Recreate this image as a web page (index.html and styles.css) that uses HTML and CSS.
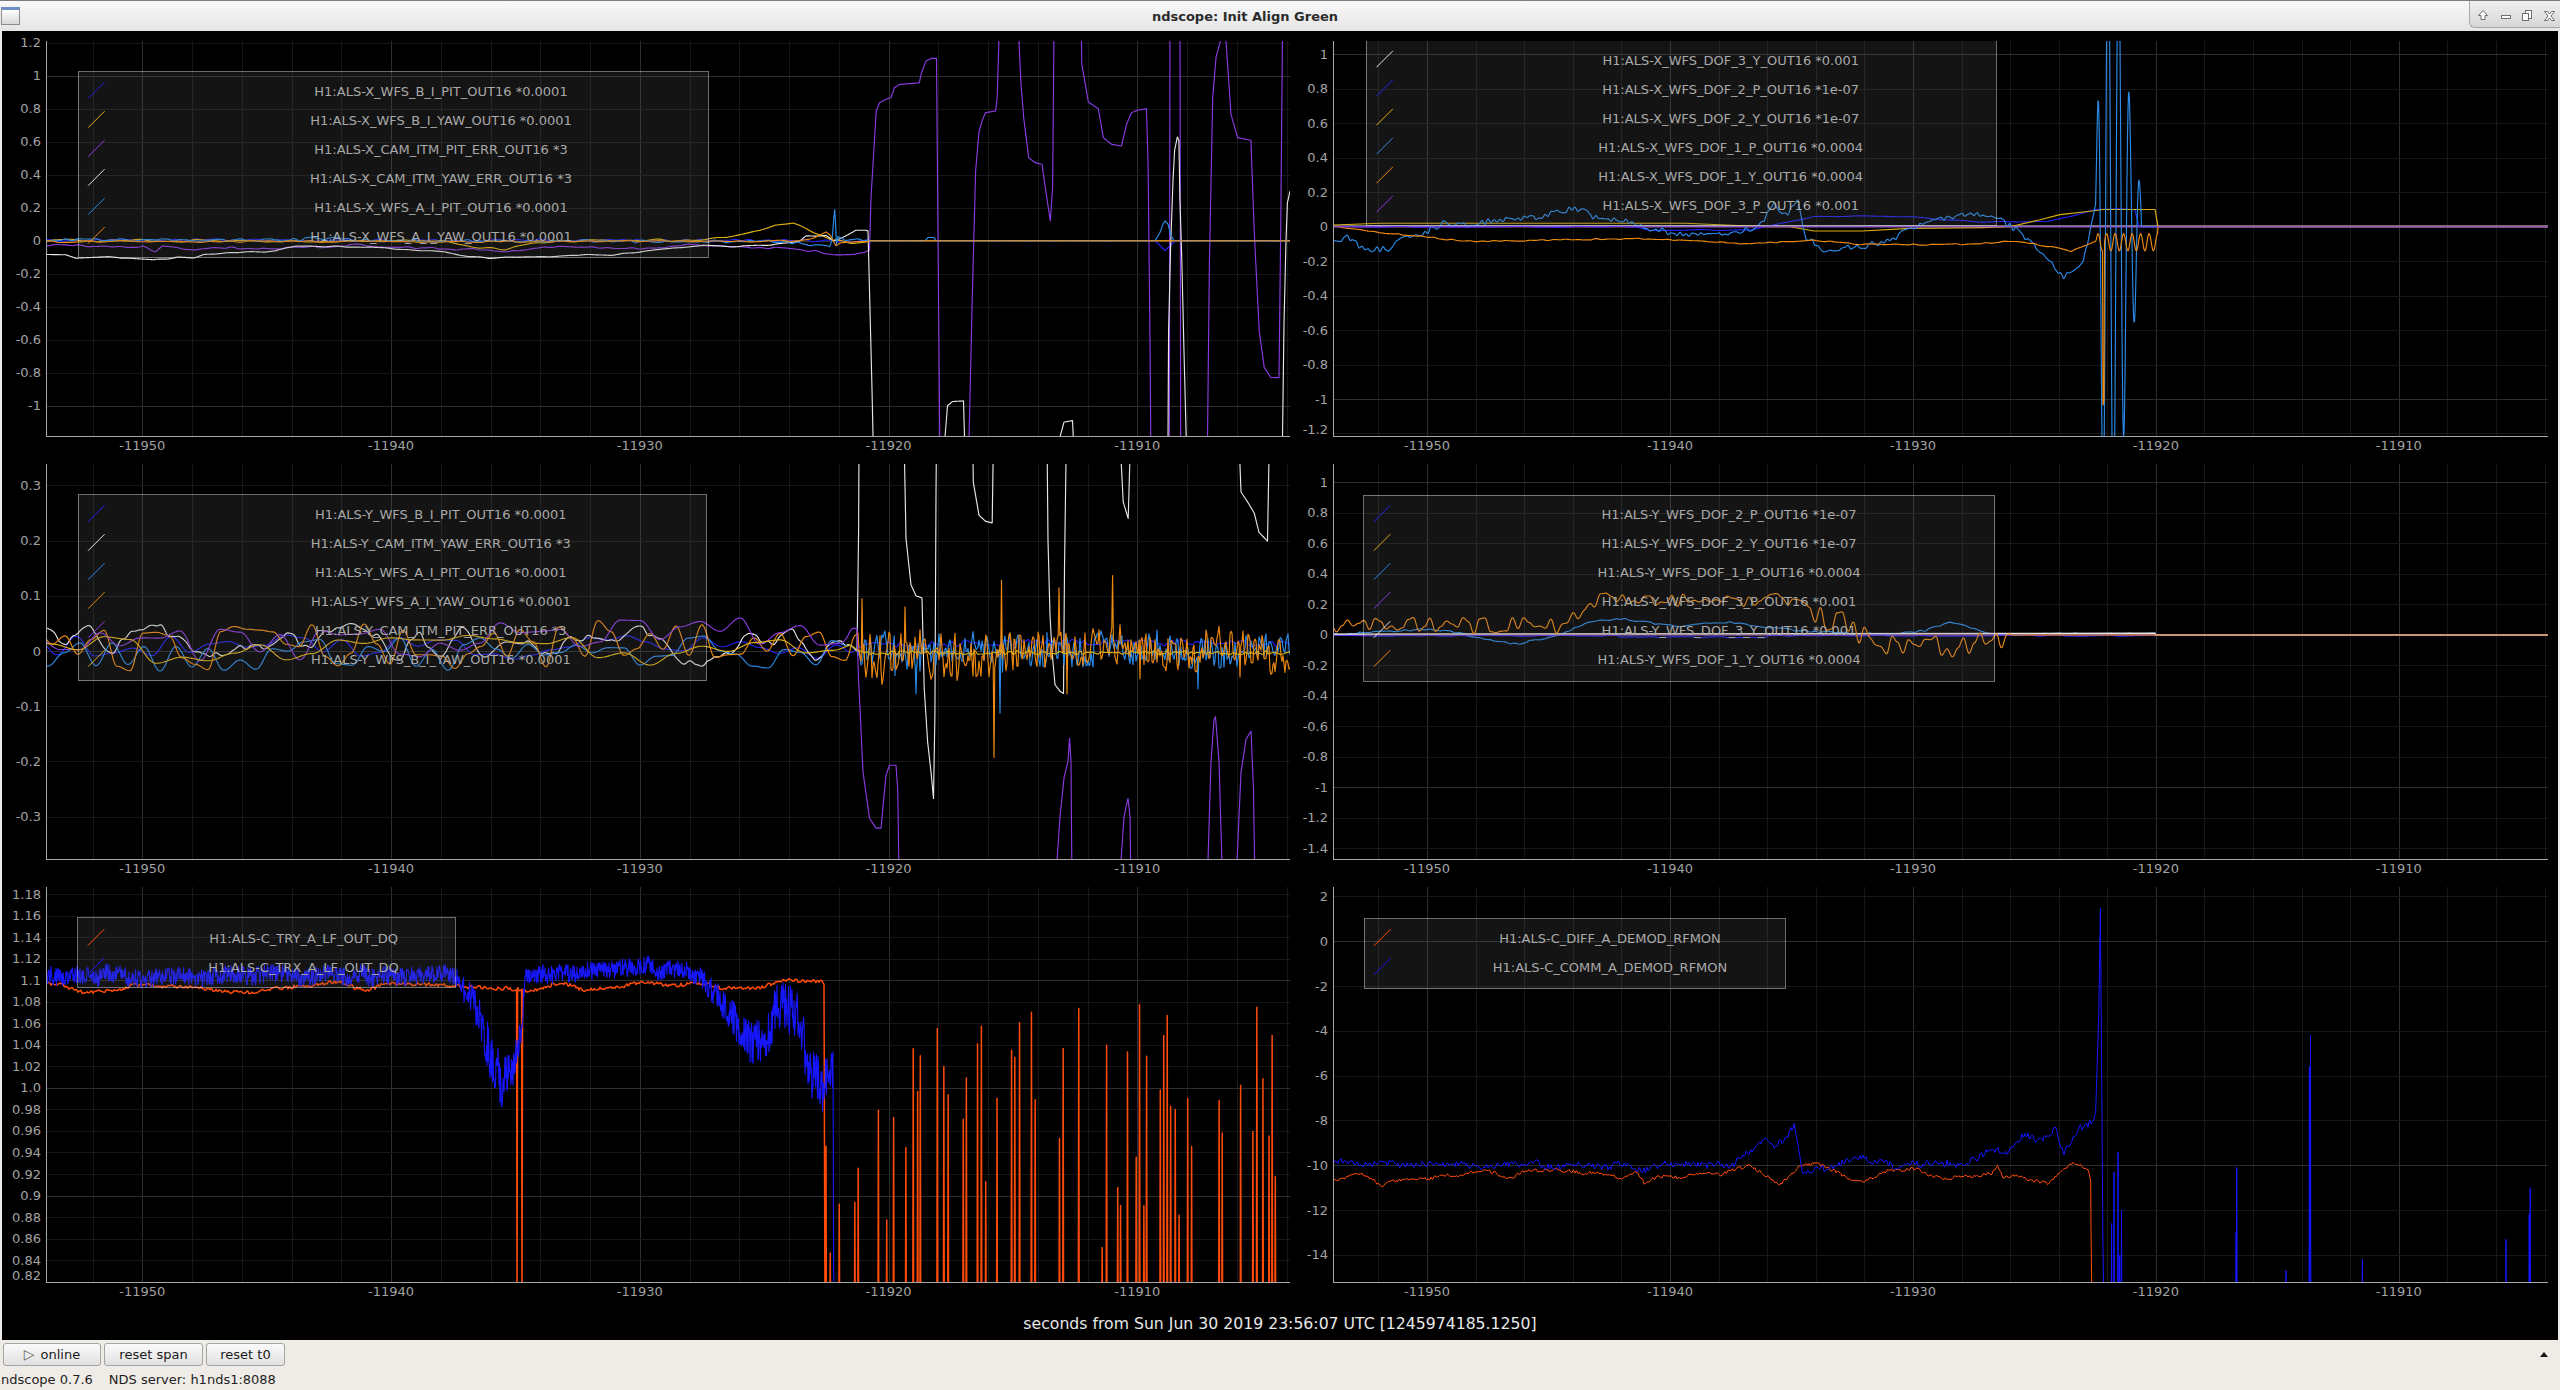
FILE: index.html
```html
<!DOCTYPE html>
<html lang="en">
<head>
<meta charset="utf-8">
<title>ndscope: Init Align Green</title>
<link rel="stylesheet" href="styles.css">
</head>
<body>
<div class="window">
  <header class="titlebar">
    <div class="tb-left"><span class="app-icon"></span></div>
    <div class="tb-title">ndscope: Init Align Green</div>
    <div class="tb-buttons">
      <svg class="tb-icons" viewBox="0 0 91 27" width="91" height="27">
        <path class="tbi" d="M13 9.5 L17.5 14.5 L15 14.5 L15 18.5 L11 18.5 L11 14.5 L8.5 14.5 Z"/>
        <rect class="tbi" x="31.5" y="14.5" width="9" height="3"/>
        <rect class="tbi" x="55.5" y="9.5" width="6" height="8"/>
        <rect class="tbi" x="52.5" y="12.5" width="6" height="7"/>
        <path class="tbi" d="M74.5 10.5 L77.5 10.5 L79.5 13 L81.5 10.5 L84.5 10.5 L81 15 L84.5 19.5 L81.5 19.5 L79.5 17 L77.5 19.5 L74.5 19.5 L78 15 Z"/>
      </svg>
    </div>
  </header>
  <main class="scope">
    <div class="plots">
      <svg class="plot" id="plotA" viewBox="2 31 1298 423" width="1298" height="423"></svg>
      <svg class="plot" id="plotB" viewBox="1300 31 1258 423" width="1258" height="423"></svg>
      <svg class="plot" id="plotC" viewBox="2 454 1298 423" width="1298" height="423"></svg>
      <svg class="plot" id="plotD" viewBox="1300 454 1258 423" width="1258" height="423"></svg>
      <svg class="plot" id="plotE" viewBox="2 877 1298 423" width="1298" height="423"></svg>
      <svg class="plot" id="plotF" viewBox="1300 877 1258 423" width="1258" height="423"></svg>
    </div>
    <div class="caption">seconds from Sun Jun 30 2019 23:56:07 UTC [1245974185.1250]</div>
  </main>
  <div class="controls">
    <button class="btn btn-online"><span class="play">&#9655;</span><span>online</span></button>
    <button class="btn btn-span">reset span</button>
    <button class="btn btn-t0">reset t0</button>
    <span class="collapse"></span>
  </div>
  <div class="status"><span>ndscope 0.7.6</span><span>NDS server: h1nds1:8088</span></div>
</div>
<script src="script.js"></script>
</body>
</html>
```

FILE: styles.css
```css
* { box-sizing: border-box; }
html, body { margin: 0; padding: 0; }
body {
  width: 2560px;
  height: 1390px;
  overflow: hidden;
  background: #efebe7;
  font-family: "DejaVu Sans", sans-serif;
  color: #1a1a1a;
}
.window {
  display: flex;
  flex-direction: column;
  width: 2560px;
  height: 1390px;
}

/* title bar */
.titlebar {
  flex: none;
  height: 31px;
  display: flex;
  align-items: center;
  border-top: 1px solid #7c7c7c;
  background: linear-gradient(#f8f8f8, #e5e5e5);
}
.tb-left {
  width: 21px;
  height: 100%;
  display: flex;
  align-items: center;
  padding-left: 1px;
}
.app-icon {
  display: block;
  width: 19px;
  height: 18px;
  border: 1px solid #8d8d8d;
  border-top: 3px solid #6d8fc4;
  background: linear-gradient(#ffffff, #d8d8d8);
}
.tb-title {
  flex: 1;
  text-align: center;
  font-weight: bold;
  font-size: 13px;
  color: #2b2b2b;
}
.tb-buttons {
  align-self: flex-start;
  width: 91px;
  height: 27px;
  border-left: 1px solid #a9a9a9;
  border-bottom: 1px solid #a9a9a9;
  border-bottom-left-radius: 6px;
  background: linear-gradient(#f0f0f0, #d6d6d6);
}
.tb-icons { display: block; }
.tbi { fill: #fbfbfb; stroke: #707070; stroke-width: 1; }

/* scope area */
.scope {
  flex: none;
  height: 1309px;
  margin: 0 2px;
  background: #000;
  display: flex;
  flex-direction: column;
}
.plots {
  display: grid;
  grid-template-columns: 1298px 1258px;
  grid-template-rows: repeat(3, 423px);
}
.plot { display: block; }
.caption {
  flex: 1;
  display: flex;
  align-items: center;
  justify-content: center;
  padding-top: 6px;
  color: #e8e8e8;
  font-size: 15.7px;
}

/* svg plot parts */
.plot .gmin { stroke: #171717; stroke-width: 1; shape-rendering: crispEdges; }
.plot .gmaj { stroke: #2e2e2e; stroke-width: 1; shape-rendering: crispEdges; }
.plot .curve { fill: none; stroke-linejoin: round; stroke-linecap: butt; }
.plot .lgbox {
  fill: rgba(100, 100, 100, 0.2);
  stroke: rgba(255, 255, 255, 0.42);
  stroke-width: 1;
  shape-rendering: crispEdges;
}
.plot .sample { stroke-width: 1; }
.plot .lgtext {
  font-family: "DejaVu Sans", sans-serif;
  font-size: 13px;
  fill: #a9a9a9;
  text-anchor: middle;
  dominant-baseline: central;
}
.plot .axis line { stroke: #a8a8a8; stroke-width: 1; shape-rendering: crispEdges; }
.plot .ticks text {
  font-family: "DejaVu Sans", sans-serif;
  font-size: 13px;
  fill: #a2a2a2;
  dominant-baseline: central;
}
.plot .yl { text-anchor: end; }
.plot .xl { text-anchor: middle; }

/* controls */
.controls {
  flex: none;
  height: 28px;
  display: flex;
  align-items: center;
  gap: 3px;
  padding: 0 12px 0 3px;
}
.btn {
  height: 23px;
  padding: 0;
  margin: 0;
  font-family: "DejaVu Sans", sans-serif;
  font-size: 13px;
  color: #1a1a1a;
  border: 1px solid #a4a4a4;
  border-radius: 3px;
  background: linear-gradient(#fbfbfb, #e0e0e0);
  display: flex;
  align-items: center;
  justify-content: center;
  gap: 6px;
}
.btn-online { width: 98px; }
.btn-span { width: 99px; }
.btn-t0 { width: 79px; }
.play { color: #6a6a6a; font-size: 14px; }
.collapse {
  margin-left: auto;
  width: 0;
  height: 0;
  border-left: 4px solid transparent;
  border-right: 4px solid transparent;
  border-bottom: 5px solid #111;
}

/* status */
.status {
  flex: 1;
  display: flex;
  align-items: center;
  gap: 16px;
  padding-left: 1px;
  font-size: 13px;
  color: #1e1e1e;
}
```

FILE: script.js
```js
(function () {
  var NS = 'http://www.w3.org/2000/svg';
  var X0 = -11953.83, SPAN = 49.97;
  var COL = {
    blue: '#2222f0', gold: '#dcae14', purple: '#8a3be0', white: '#e6e6e6',
    sky: '#2b8be8', orange: '#ee8a12', red: '#ff4b0a', pblue: '#1616ff'
  };

  function el(tag, attrs, parent, text) {
    var e = document.createElementNS(NS, tag);
    for (var k in attrs) e.setAttribute(k, attrs[k]);
    if (text != null) e.textContent = text;
    if (parent) parent.appendChild(e);
    return e;
  }
  function rng(seed) {
    var a = seed >>> 0;
    return function () {
      a = (a + 0x6D2B79F5) >>> 0;
      var t = a;
      t = Math.imul(t ^ (t >>> 15), t | 1);
      t ^= t + Math.imul(t ^ (t >>> 7), t | 61);
      return ((t ^ (t >>> 14)) >>> 0) / 4294967296;
    };
  }
  function interp(keys, x) {
    var n = keys.length;
    if (x <= keys[0][0]) return keys[0][1];
    for (var i = 1; i < n; i++) {
      if (x <= keys[i][0]) {
        var x0 = keys[i - 1][0], v0 = keys[i - 1][1], x1 = keys[i][0], v1 = keys[i][1];
        return x1 === x0 ? v1 : v0 + (v1 - v0) * (x - x0) / (x1 - x0);
      }
    }
    return keys[n - 1][1];
  }
  function layer(seed, corr) {
    var r = rng(seed), vals = [];
    return function (x) {
      var p = x / corr, i = Math.floor(p), f = p - i;
      while (vals.length < i + 2) vals.push(r() * 2 - 1);
      var u = (1 - Math.cos(f * Math.PI)) / 2;
      return vals[i] * (1 - u) + vals[i + 1] * u;
    };
  }
  function byX(a, b) { return a[0] - b[0]; }
  function series(keys, noise, seed, step) {
    step = step || 1;
    var xa = keys[0][0], xb = keys[keys.length - 1][0];
    var xs = [];
    for (var x = Math.ceil(xa / step) * step; x <= xb; x += step) xs.push(Math.round(x * 100) / 100);
    keys.forEach(function (k) { xs.push(k[0]); });
    xs.sort(function (a, b) { return a - b; });
    var uniq = xs.filter(function (x, i) { return i === 0 || Math.abs(x - xs[i - 1]) > 0.01; });
    var L = (noise || []).map(function (n, j) {
      return { f: layer(seed * 977 + j * 131 + 7, n.c), a: n.a,
        from: n.from == null ? -1e9 : n.from, to: n.to == null ? 1e9 : n.to };
    });
    return uniq.map(function (x) {
      var v = interp(keys, x);
      for (var j = 0; j < L.length; j++) {
        var l = L[j];
        if (x < l.from || x > l.to) continue;
        var a = typeof l.a === 'number' ? l.a : interp(l.a, x);
        if (a) v += a * l.f(x);
      }
      return [x, v];
    });
  }
  function fn(a, b, step, f) {
    var out = [];
    for (var x = a; x <= b + 1e-9; x += step) out.push([x, f(x)]);
    return out;
  }
  function spk(list, base, w) {
    var out = [];
    list.forEach(function (s) { out.push([s[0] - w, base], [s[0], s[1]], [s[0] + w, base]); });
    return out;
  }
  function withSpk(keys, spikes, w) {
    var out = keys.slice();
    spikes.forEach(function (s) {
      var b = interp(keys, s[0]);
      out.push([s[0] - w, b], [s[0], s[1]], [s[0] + w, b]);
    });
    return out.sort(byX);
  }
  function ticks(from, n, step, fmt) {
    var out = [];
    for (var i = 0; i < n; i++) {
      var v = Math.round((from - i * step) * 1e6) / 1e6;
      out.push([v, fmt(v)]);
    }
    return out;
  }
  function f1(v) { return String(Math.round(v * 10) / 10); }
  function fE(v) { return Math.round(v * 100) % 10 === 0 ? v.toFixed(1) : v.toFixed(2); }
  function fI(v) { return String(Math.round(v)); }

  function toD(pts, P) {
    var s = '';
    for (var i = 0; i < pts.length; i++) {
      var y = P.top + (P.tv - pts[i][1]) * P.sc;
      if (y < P.top - 30) y = P.top - 30; else if (y > P.top + P.h + 30) y = P.top + P.h + 30;
      s += (i ? 'L' : 'M') + pts[i][0].toFixed(2) + ' ' + y.toFixed(2);
    }
    return s;
  }

  function build(P) {
    var svg = document.getElementById('plot' + P.id);
    var right = P.left + P.w, bottom = P.top + P.h;
    var defs = el('defs', {}, svg);
    var cp = el('clipPath', { id: 'clip' + P.id }, defs);
    el('rect', { x: P.left, y: P.top, width: P.w, height: P.h }, cp);

    var grid = el('g', {}, svg);
    for (var t = -11952; t <= -11904; t += 2) {
      var x = Math.round(P.left + (t - X0) * P.w / SPAN) + 0.5;
      el('line', { x1: x, x2: x, y1: P.top, y2: bottom, 'class': t % 10 === 0 ? 'gmaj' : 'gmin' }, grid);
    }
    P.yt.forEach(function (tk) {
      var y = Math.round(P.top + (P.tv - tk[0]) * P.sc) + 0.5;
      if (y < P.top) return;
      var maj = P.major.some(function (m) { return Math.abs(m - tk[0]) < 1e-6; });
      el('line', { x1: P.left, x2: right, y1: y, y2: y, 'class': maj ? 'gmaj' : 'gmin' }, grid);
    });

    var cg = el('g', { 'clip-path': 'url(#clip' + P.id + ')' }, svg);
    P.curves.forEach(function (c) {
      el('path', { d: toD(c.pts, P), stroke: c.col, 'stroke-width': c.w || P.lw, 'class': 'curve' }, cg);
    });
    var lg = P.legend;
    var lgG = el('g', {}, cg);
    el('rect', { x: lg.L + 0.5, y: lg.T + 0.5, width: lg.W, height: lg.H, 'class': 'lgbox' }, lgG);
    P.curves.forEach(function (c, i) {
      var cy = lg.cy + i * lg.dy;
      el('line', { x1: lg.L + 10.5, y1: cy + 7, x2: lg.L + 27, y2: cy - 9.5, stroke: c.col, 'class': 'sample' }, lgG);
      el('text', { x: lg.tc, y: cy, 'class': 'lgtext' }, lgG, c.name);
    });

    var ax = el('g', { 'class': 'axis' }, svg);
    el('line', { x1: P.left - 0.5, x2: P.left - 0.5, y1: P.top, y2: bottom + 1 }, ax);
    el('line', { x1: P.left - 1, x2: right, y1: bottom + 0.5, y2: bottom + 0.5 }, ax);

    var tx = el('g', { 'class': 'ticks' }, svg);
    P.yt.forEach(function (tk) {
      var y = P.top + (P.tv - tk[0]) * P.sc;
      y = Math.min(y, bottom - 7);
      el('text', { x: P.left - 6, y: y, 'class': 'yl' }, tx, tk[1]);
    });
    for (var t2 = -11950; t2 <= -11910; t2 += 10) {
      var x2 = P.left + (t2 - X0) * P.w / SPAN;
      el('text', { x: x2, y: bottom + 9, 'class': 'xl' }, tx, String(t2));
    }
  }

  /* ---------------- Plot A : X arm WFS / camera ---------------- */
  var PA = {
    id: 'A', left: 47, top: 41, w: 1243, h: 395, tv: 1.2103, sc: 165, lw: 1.15,
    yt: ticks(1.2, 12, 0.2, f1), major: [1, 0, -1],
    legend: { L: 77.6, T: 71, W: 630, H: 186, cy: 91.7, dy: 29, tc: 441 },
    curves: [
      { name: 'H1:ALS-X_WFS_B_I_PIT_OUT16 *0.0001', col: COL.blue,
        pts: series([[47, 0.004], [868, 0.0], [869, 0], [1155, 0], [1160, -0.03], [1165, -0.06], [1170, -0.03], [1176, 0], [1290, 0]],
          [{ a: [[47, 0.008], [868, 0.008], [869, 0.0015], [1290, 0.0015]], c: 7 }], 11) },
      { name: 'H1:ALS-X_WFS_B_I_YAW_OUT16 *0.0001', col: COL.gold,
        pts: series([[47, 0.0], [440, 0.0], [459, -0.03], [480, -0.048], [505, -0.048], [520, -0.03], [540, -0.01], [560, 0], [700, 0.003], [714, 0.017], [734, 0.037], [760, 0.067], [775, 0.1], [793, 0.109], [806.5, 0.079], [820, 0.038], [833, 0.0], [850, -0.01], [868, 0], [1290, 0]],
          [{ a: [[47, 0.01], [866, 0.01], [869, 0], [1290, 0]], c: 14 }], 12) },
      { name: 'H1:ALS-X_CAM_ITM_PIT_ERR_OUT16 *3', col: COL.purple,
        pts: series([[47, -0.026], [76, -0.026], [87, -0.036], [143, -0.036], [150, -0.05], [156, -0.066], [163, -0.036], [179, -0.046], [194, -0.056], [214, -0.036], [240, -0.046], [286, -0.046], [327, -0.036], [357, -0.026], [388, -0.036], [433, -0.046], [485, -0.056], [510, -0.066], [530, -0.046], [561, -0.036], [592, -0.04], [648, -0.046], [688, -0.026], [740, -0.036], [785, -0.046], [813, -0.062], [833, -0.087], [850, -0.087], [868, -0.062],
          [869.5, -0.06], [871, 0.26], [876.2, 0.786], [879.5, 0.836], [886, 0.857], [891, 0.867], [894.4, 0.927], [899.4, 0.947], [919.3, 0.957], [921, 1.008], [925.9, 1.088], [931, 1.105], [936.5, 1.105], [939.8, -1.25], [940, -1.6],
          [968.5, -1.6], [969, -1.2], [972.3, -0.34], [975.6, 0.42], [979, 0.66], [982.3, 0.73], [985.6, 0.776], [995.5, 0.786], [997.2, 0.867], [998.9, 1.21], [1000, 1.6],
          [1018, 1.6], [1019, 1.2], [1021, 0.95], [1023.7, 0.745], [1028.7, 0.503], [1035.3, 0.473], [1042, 0.463], [1045.3, 0.322], [1050.3, 0.12], [1052.6, 0.322], [1053.9, 1.21], [1055, 1.6],
          [1080.5, 1.6], [1081.8, 1.069], [1088.4, 0.84], [1098.3, 0.8], [1103.3, 0.625], [1111.6, 0.584], [1121.5, 0.574], [1126.5, 0.705], [1131.5, 0.776], [1138.1, 0.792], [1146.4, 0.8], [1148.1, 0.463], [1150, -0.6], [1151, -1.6],
          [1169.3, -1.6], [1170, 1.6], [1180, 1.6], [1180.7, -1.6],
          [1207, -1.6], [1207.5, -1.2], [1209.4, -0.14], [1212.7, 0.867], [1216, 1.109], [1220.4, 1.21], [1221, 1.6],
          [1225.5, 1.6], [1226, 1.21], [1231, 0.766], [1237.6, 0.625], [1250.9, 0.608], [1254.2, 0.06], [1259.2, -0.546], [1264.2, -0.768], [1270.8, -0.829], [1279, -0.83], [1280.7, 0.06], [1282.4, 1.21], [1283, 1.6], [1290, 1.6]],
          [{ a: [[47, 0.006], [865, 0.006], [868, 0], [1290, 0]], c: 8 }], 13) },
      { name: 'H1:ALS-X_CAM_ITM_YAW_ERR_OUT16 *3', col: COL.white,
        pts: series([[47, -0.087], [66, -0.087], [76, -0.107], [102, -0.1], [117, -0.1], [138, -0.112], [153, -0.117], [178, -0.1], [194, -0.107], [204, -0.087], [224, -0.077], [245, -0.066], [275, -0.066], [286, -0.046], [296, -0.036], [357, -0.036], [388, -0.046], [408, -0.056], [444, -0.066], [459, -0.087], [490, -0.107], [510, -0.097], [541, -0.097], [571, -0.087], [612, -0.087], [643, -0.066], [688, -0.036], [704, -0.026], [740, -0.036], [780, -0.02], [800, 0.0], [806, 0.03], [826, 0.03], [833, 0.0], [850, 0.04], [856, 0.06], [868, 0.06],
          [869.5, -0.3], [872, -0.9], [874.5, -1.6], [944.5, -1.6], [945, -1.19], [947.5, -1.0], [952.4, -0.975], [963.5, -0.971], [964.5, -1.19], [965.5, -1.6],
          [1060, -1.6], [1060.4, -1.18], [1064, -1.1], [1072.5, -1.09], [1073.3, -1.19], [1074, -1.6],
          [1167.5, -1.6], [1168, -1.19], [1168.6, -0.547], [1170.6, -0.04], [1173, 0.365], [1174.6, 0.547], [1177.3, 0.628], [1178.9, 0.608], [1179.9, 0.26], [1181.9, -0.14], [1183.9, -0.65], [1186.2, -1.19], [1186.5, -1.6],
          [1282, -1.6], [1282.5, -1.19], [1284, -0.5], [1286, 0.0], [1287.4, 0.23], [1290, 0.3]],
          [{ a: [[47, 0.004], [865, 0.004], [868, 0], [1290, 0]], c: 12 }], 14) },
      { name: 'H1:ALS-X_WFS_A_I_PIT_OUT16 *0.0001', col: COL.sky,
        pts: series([[47, 0.003], [300, 0.005], [306, 0.014], [340, 0.014], [360, 0.0], [780, -0.005], [820, -0.03], [829.7, -0.042], [832, 0.0], [834, 0.15], [834.7, 0.19], [835.5, 0.12], [836.5, -0.02], [838, 0.03], [845, 0.01], [869, 0], [925, 0], [928, 0.02], [934, 0.02], [936, 0], [1155, 0], [1160, 0.05], [1163, 0.1], [1165, 0.12], [1168, 0.1], [1171, 0.03], [1174, 0], [1290, 0]],
          [{ a: [[47, 0.009], [866, 0.009], [869, 0.001], [1290, 0.001]], c: 6 }], 15) },
      { name: 'H1:ALS-X_WFS_A_I_YAW_OUT16 *0.0001', col: COL.orange,
        pts: series([[47, -0.005], [500, -0.005], [780, -0.002], [800, 0.0], [815, 0.02], [826, 0.05], [830, 0.03], [836, -0.03], [840, -0.01], [869, 0], [1290, 0]],
          [{ a: [[47, 0.006], [866, 0.006], [869, 0], [1290, 0]], c: 10 }], 16) }
    ]
  };

  /* ---------------- Plot B : X arm DOF ---------------- */
  var Bsky = series([[1334, -0.083], [1348.2, -0.064], [1364.3, -0.131], [1388.4, -0.131], [1396.4, -0.083], [1420.5, -0.044], [1444.6, 0.024], [1468.8, 0.004], [1492.9, 0.043], [1541, 0.053], [1573.2, 0.111], [1597.3, 0.053], [1621.4, 0.043], [1645.5, -0.005], [1669.7, -0.035], [1717.9, -0.044], [1750, -0.015], [1766, 0.053], [1774, 0.149], [1782, 0.06], [1790, 0.091], [1798, 0.149], [1806, -0.064], [1822, -0.131], [1862.5, -0.122], [1894.7, -0.064], [1918.8, 0.014], [1943, 0.043], [1975, 0.076], [1991, 0.062], [2007, 0.014], [2023, -0.044], [2039.3, -0.141], [2063.4, -0.296], [2083.5, -0.2], [2095.6, 0.13]],
    [{ a: 0.018, c: 3 }], 23)
    .concat(fn(2096.5, 2141, 0.5, function (x) {
      var a = interp([[2096, 0.4], [2100, 1.1], [2104, 1.8], [2118, 1.8], [2124, 1.2], [2130, 0.7], [2136, 0.5], [2141, 0.15]], x);
      return a * Math.sin(2 * Math.PI * (x - 2096) / 10.5 + 0.6);
    }))
    .concat([[2141.5, 0], [2548, 0]]);
  var Borange = series([[1334, 0.003], [1380.4, -0.035], [1420.5, -0.054], [1460.7, -0.083], [1492.9, -0.083], [1541, -0.079], [1589.3, -0.073], [1637.5, -0.068], [1685.7, -0.083], [1750, -0.098], [1814.3, -0.079], [1862.5, -0.102], [1943, -0.106], [2007, -0.088], [2023, -0.087], [2071.5, -0.141], [2095.6, -0.083]],
    [{ a: 0.004, c: 6 }], 24)
    .concat(fn(2096.5, 2157.5, 0.5, function (x) {
      return -0.09 + 0.05 * Math.sin(2 * Math.PI * (x - 2096) / 8.5) + (Math.abs(x - 2103.5) < 0.6 ? -0.9 : 0);
    }))
    .concat([[2158, 0], [2548, 0]]);
  var PB = {
    id: 'B', left: 1334, top: 41, w: 1214, h: 395, tv: 1.0778, sc: 172.3, lw: 1.15,
    yt: ticks(1, 12, 0.2, f1), major: [1, 0, -1],
    legend: { L: 1365.9, T: 39, W: 630, H: 186, cy: 60.3, dy: 29, tc: 1730.7 },
    curves: [
      { name: 'H1:ALS-X_WFS_DOF_3_Y_OUT16 *0.001', col: COL.white, pts: [[1334, 0.003], [2548, 0.003]] },
      { name: 'H1:ALS-X_WFS_DOF_2_P_OUT16 *1e-07', col: COL.blue,
        pts: series([[1334, 0], [1637, 0], [1650, -0.02], [1750, -0.02], [1780, 0.02], [1814, 0.06], [1910, 0.06], [1950, 0.04], [1983, 0.03], [2047, 0.03], [2070, 0.06], [2095, 0.1], [2135, 0.1], [2139, 0.0], [2548, 0]],
          [{ a: [[1334, 0.004], [2135, 0.004], [2140, 0], [2548, 0]], c: 20 }], 21) },
      { name: 'H1:ALS-X_WFS_DOF_2_Y_OUT16 *1e-07', col: COL.gold,
        pts: [[1334, 0.01], [1380, 0.02], [1685, 0.02], [1766, 0.0], [1790, 0.0], [1814, -0.025], [1862, -0.025], [1910, -0.01], [1983, -0.005], [2010, 0.0], [2040, 0.04], [2060, 0.07], [2090, 0.09], [2104, 0.1], [2155, 0.1], [2158, 0], [2548, 0]] },
      { name: 'H1:ALS-X_WFS_DOF_1_P_OUT16 *0.0004', col: COL.sky, pts: Bsky },
      { name: 'H1:ALS-X_WFS_DOF_1_Y_OUT16 *0.0004', col: COL.orange, pts: Borange },
      { name: 'H1:ALS-X_WFS_DOF_3_P_OUT16 *0.001', col: COL.purple, pts: [[1334, 0], [2548, 0]] }
    ]
  };

  /* ---------------- Plot C : Y arm WFS / camera ---------------- */
  var PC = {
    id: 'C', left: 47, top: 464, w: 1243, h: 395, tv: 0.33877, sc: 552, lw: 1.15,
    yt: ticks(0.3, 7, 0.1, f1), major: [0],
    legend: { L: 77.6, T: 494.3, W: 628.2, H: 186, cy: 514.7, dy: 29, tc: 440.8 },
    curves: [
      { name: 'H1:ALS-Y_WFS_B_I_PIT_OUT16 *0.0001', col: COL.blue,
        pts: series([[47, 0.005], [857, 0.005], [858, 0.01], [1000, 0.015], [1180, 0.015], [1290, 0.012]],
          [{ a: [[47, 0.024], [850, 0.024], [858, 0.0], [1290, 0]], c: 19 }, { a: [[47, 0], [856, 0], [858, 0.006], [1290, 0.006]], c: 4 }], 61) },
      { name: 'H1:ALS-Y_CAM_ITM_YAW_ERR_OUT16 *3', col: COL.white,
        pts: series([[47, 0.03], [857, 0.0], [858.6, 0.216], [859.2, 0.45], [903.4, 0.45], [906, 0.204], [911, 0.12], [916, 0.1], [922, 0.096], [924.2, -0.067], [927.6, -0.164], [931, -0.219], [933.5, -0.267], [934.9, -0.116], [935.9, 0.25], [936.5, 0.45], [972.3, 0.45], [973.3, 0.306], [979, 0.246], [985.6, 0.235], [992.2, 0.232], [993.9, 0.45], [1047, 0.45], [1048, 0.2], [1050, 0.065], [1052, 0.0], [1055, -0.061], [1060, -0.073], [1063.5, -0.077], [1064.5, 0.15], [1066.8, 0.45], [1118.2, 0.45], [1123.2, 0.27], [1128.2, 0.24], [1131.5, 0.45], [1237.6, 0.45], [1241, 0.288], [1247.6, 0.27], [1254.2, 0.25], [1259, 0.215], [1267.5, 0.199], [1270, 0.45], [1290, 0.45]],
          [{ a: [[47, 0.035], [848, 0.035], [857, 0], [1290, 0]], c: 22 }, { a: [[47, 0.006], [848, 0.006], [857, 0], [1290, 0]], c: 6 }], 62) },
      { name: 'H1:ALS-Y_WFS_A_I_PIT_OUT16 *0.0001', col: COL.sky,
        pts: series(withSpk([[47, -0.01], [857, 0.0], [858, 0.0], [1290, 0.005]], [[895, -0.06], [916, -0.05], [1000, -0.09], [1002.5, -0.05], [1047, 0.05], [1198, -0.05]], 0.8),
          [{ a: [[47, 0.03], [850, 0.03], [858, 0.012], [1290, 0.012]], c: 16 }, { a: [[47, 0], [856, 0], [858, 0.032], [1290, 0.028]], c: 1.6 }], 63) },
      { name: 'H1:ALS-Y_WFS_A_I_YAW_OUT16 *0.0001', col: COL.orange,
        pts: series(withSpk([[47, 0.0], [857, 0.02], [858, 0.0], [1290, 0.0]], [[862, 0.1], [905, 0.07], [994, -0.17], [1001.5, 0.16], [1059, 0.09], [1067, -0.09], [1112.6, 0.1], [1140, -0.07], [1240, -0.05]], 0.8),
          [{ a: [[47, 0.042], [850, 0.042], [858, 0.015], [1290, 0.015]], c: 13 }, { a: [[47, 0], [856, 0], [858, 0.05], [930, 0.05], [1000, 0.04], [1290, 0.035]], c: 1.6 }], 64) },
      { name: 'H1:ALS-Y_CAM_ITM_PIT_ERR_OUT16 *3', col: COL.purple,
        pts: series([[47, 0.0], [856, 0.04], [857, 0.04], [858.5, -0.05], [860, -0.104], [863, -0.219], [869.5, -0.303], [876, -0.321], [881, -0.321], [886, -0.225], [889.5, -0.207], [896, -0.207], [897.7, -0.25], [899.4, -0.45], [1055, -0.45], [1057, -0.38], [1060, -0.3], [1064, -0.23], [1068, -0.2], [1069.5, -0.158], [1071, -0.2], [1072, -0.45], [1119, -0.45], [1121, -0.38], [1124, -0.3], [1128, -0.267], [1130, -0.3], [1131, -0.45], [1206, -0.45], [1208, -0.38], [1211, -0.2], [1214, -0.125], [1215.5, -0.119], [1219, -0.2], [1223, -0.45], [1235, -0.45], [1237, -0.38], [1241, -0.22], [1246, -0.16], [1251, -0.145], [1253.5, -0.25], [1255, -0.45], [1290, -0.45]],
          [{ a: [[47, 0.032], [848, 0.032], [856, 0], [1290, 0]], c: 20 }], 65) },
      { name: 'H1:ALS-Y_WFS_B_I_YAW_OUT16 *0.0001', col: COL.gold,
        pts: series([[47, 0.005], [856, 0.0], [858, -0.003], [1290, -0.003]],
          [{ a: [[47, 0.028], [850, 0.028], [858, 0.0], [1290, 0]], c: 26 }, { a: [[47, 0], [856, 0], [858, 0.004], [1290, 0.004]], c: 3 }], 66) }
    ]
  };

  /* ---------------- Plot D : Y arm DOF ---------------- */
  var PD = {
    id: 'D', left: 1334, top: 464, w: 1214, h: 395, tv: 1.1213, sc: 152.5, lw: 1.15,
    yt: ticks(1, 13, 0.2, f1), major: [1, 0, -1],
    legend: { L: 1363.3, T: 494.7, W: 631, H: 186, cy: 514.7, dy: 29, tc: 1729 },
    curves: [
      { name: 'H1:ALS-Y_WFS_DOF_2_P_OUT16 *1e-07', col: COL.blue,
        pts: series([[1334, -0.005], [1618, -0.005], [1620, -0.015], [1766, -0.015], [1768, -0.005], [2155, -0.005], [2156, 0], [2548, 0]],
          [{ a: [[1334, 0.004], [2155, 0.004], [2156, 0], [2548, 0]], c: 10 }], 51) },
      { name: 'H1:ALS-Y_WFS_DOF_2_Y_OUT16 *1e-07', col: COL.gold, pts: [[1334, 0.005], [2155, 0.005], [2156, 0], [2548, 0]] },
      { name: 'H1:ALS-Y_WFS_DOF_1_P_OUT16 *0.0004', col: COL.sky,
        pts: series([[1334, 0.005], [1429.6, 0.04], [1455, 0.02], [1485.7, -0.03], [1516, -0.06], [1557, -0.005], [1587.8, 0.08], [1618, 0.11], [1638.8, 0.09], [1679.6, 0.055], [1710, 0.08], [1730.6, 0.08], [1761, 0.055], [1812, 0.02], [1863, 0.01], [1888.8, 0.0], [1924.5, 0.03], [1950, 0.08], [1965, 0.06], [1985.7, 0.01], [2010, 0.0], [2050, 0.01], [2100, 0.005], [2155, 0.01], [2156, 0], [2548, 0]],
          [{ a: [[1334, 0.006], [2155, 0.006], [2156, 0], [2548, 0]], c: 5 }], 53) },
      { name: 'H1:ALS-Y_WFS_DOF_3_P_OUT16 *0.001', col: COL.purple, pts: [[1334, 0], [2548, 0]] },
      { name: 'H1:ALS-Y_WFS_DOF_3_Y_OUT16 *0.001', col: COL.white, pts: [[1334, 0.006], [2155, 0.012], [2156, 0], [2548, 0]] },
      { name: 'H1:ALS-Y_WFS_DOF_1_Y_OUT16 *0.0004', col: COL.orange,
        pts: series([[1334, 0.06], [1557, 0.06], [1598, 0.23], [1787, 0.23], [1830, 0.1], [1889, -0.06], [1995, -0.06], [2010, 0], [2548, 0]],
          [{ a: [[1334, 0.055], [1557, 0.055], [1598, 0.05], [1787, 0.05], [1830, 0.09], [1995, 0.09], [2012, 0], [2548, 0]], c: 5.5 }], 56) }
    ]
  };

  /* ---------------- Plot E : arm transmission ---------------- */
  var rs = rng(555), spE = [], xs = 826;
  while (xs < 1288) { spE.push([xs, 0.845 + rs() * 0.235]); xs += 2.6 + rs() * rs() * 28; }
  var Ered = series([[47, 1.093], [516.6, 1.094], [517, 0.7], [517.6, 1.094], [521.6, 1.094], [522, 0.7], [522.6, 1.094], [824, 1.096], [825, 0.7]],
    [{ a: [[47, 0.0045], [822, 0.0045], [824, 0]], c: 28 }, { a: [[47, 0.0018], [822, 0.0018], [824, 0]], c: 1.5 }], 31)
    .concat([[825.5, 0.7]]).concat(spk(spE, 0.7, 0.4)).concat([[1290, 0.7]]);
  var Eblue = series([[47, 1.104], [455, 1.104], [460, 1.1], [470, 1.085], [482, 1.06], [490, 1.03], [502, 1.005], [515, 1.02], [522, 1.06], [524.5, 1.105], [600, 1.108], [647, 1.112], [700, 1.106], [718, 1.085], [743, 1.05], [755, 1.04], [768, 1.05], [776, 1.08], [790, 1.075], [800, 1.065], [808, 1.02], [820, 1.0], [833, 1.01], [834, 0.7], [1290, 0.7]],
    [{ a: [[47, 0.0085], [455, 0.0085], [470, 0.016], [502, 0.026], [522, 0.014], [527, 0.0085], [700, 0.0085], [743, 0.02], [833, 0.026], [834, 0], [1290, 0]], c: 0.5 },
     { a: [[47, 0.003], [832, 0.003], [834, 0], [1290, 0]], c: 12 }], 32, 0.5);
  var PE = {
    id: 'E', left: 47, top: 887, w: 1243, h: 395, tv: 1.1865, sc: 1077, lw: 1.2,
    yt: ticks(1.18, 19, 0.02, fE), major: [1.1, 1.0, 0.9],
    legend: { L: 77.2, T: 917.3, W: 377.3, H: 70, cy: 938.7, dy: 28.8, tc: 303.6 },
    curves: [
      { name: 'H1:ALS-C_TRY_A_LF_OUT_DQ', col: COL.red, pts: Ered, w: 1.5 },
      { name: 'H1:ALS-C_TRX_A_LF_OUT_DQ', col: COL.pblue, pts: Eblue, w: 1.1 }
    ]
  };

  /* ---------------- Plot F : DIFF / COMM ---------------- */
  var Fred = series([[1333.8, -10.66], [1356.3, -10.36], [1372.3, -10.66], [1380.4, -10.88], [1388.4, -10.66], [1404.5, -10.66], [1436.6, -10.58], [1460.7, -10.36], [1492.9, -10.28], [1508.9, -10.51], [1525, -10.28], [1573.2, -10.21], [1621.4, -10.51], [1637.5, -10.36], [1645.5, -10.95], [1653.6, -10.66], [1669.7, -10.51], [1693.8, -10.43], [1717.9, -10.36], [1734, -10.21], [1750, -10.06], [1762, -10.36], [1779.7, -10.92], [1798.2, -10.06], [1802.3, -9.91], [1822.3, -10.06], [1862.5, -10.73], [1878.6, -10.36], [1910.7, -10.21], [1926.8, -10.43], [1959, -10.58], [1975, -10.36], [1991, -10.51], [1997.5, -9.99], [2003, -10.58], [2015.2, -10.36], [2031.3, -10.66], [2047.3, -10.8], [2063.4, -10.14], [2075.5, -9.99], [2085.9, -10.21], [2089.1, -10.36], [2090.7, -10.7], [2092, -20], [2548, -20]],
    [{ a: [[1334, 0.08], [2089, 0.08], [2090, 0], [2548, 0]], c: 1.5 }, { a: [[1334, 0.1], [2088, 0.1], [2090, 0], [2548, 0]], c: 14 }], 41);
  var Fblue = series([[1333.8, -9.88], [1460.7, -10.0], [1621.4, -10.0], [1645.5, -10.21], [1677.7, -9.91], [1734, -9.98], [1742, -9.61], [1762, -8.87], [1766, -8.72], [1774, -9.17], [1782, -8.87], [1790, -8.57], [1794.2, -8.13], [1798.2, -9.17], [1802.3, -10.21], [1806.3, -10.36], [1814.3, -10.21], [1830.4, -9.99], [1862.5, -9.76], [1894.7, -9.99], [1926.8, -9.91], [1959, -9.91], [1983, -9.47], [1991, -9.32], [2007, -9.32], [2023.2, -8.72], [2039.3, -8.87], [2055.4, -8.43], [2063.4, -9.47], [2071.5, -8.87], [2079.5, -8.28], [2087.5, -8.13], [2095.6, -7.68], [2098.8, -3.2], [2100.4, 1.47], [2101.2, -3.2], [2102.8, -12.9], [2104.4, -20]],
    [{ a: [[1334, 0.15], [2094, 0.17], [2096, 0], [2548, 0]], c: 1.5 }, { a: [[1334, 0.1], [2094, 0.1], [2096, 0], [2548, 0]], c: 12 }], 42)
    .concat(spk([[2111.6, -12.6], [2114, -10.3], [2118, -9.4], [2119.7, -14], [2121.5, -12], [2236, -13.0], [2236.8, -10.1], [2286, -14.7], [2309.4, -5.6], [2310.5, -4.2], [2362.4, -14.2], [2506, -13.3], [2529.2, -12.2], [2530.2, -11.0]], -20, 0.35))
    .concat([[2548, -20]]);
  var PF = {
    id: 'F', left: 1334, top: 887, w: 1214, h: 395, tv: 2.424, sc: 22.4, lw: 1.0,
    yt: ticks(2, 9, 2, fI), major: [0, -10],
    legend: { L: 1363.5, T: 918, W: 421, H: 70, cy: 938.7, dy: 29, tc: 1610 },
    curves: [
      { name: 'H1:ALS-C_DIFF_A_DEMOD_RFMON', col: COL.red, pts: Fred },
      { name: 'H1:ALS-C_COMM_A_DEMOD_RFMON', col: COL.pblue, pts: Fblue }
    ]
  };

  [PA, PB, PC, PD, PE, PF].forEach(build);
})();
```
